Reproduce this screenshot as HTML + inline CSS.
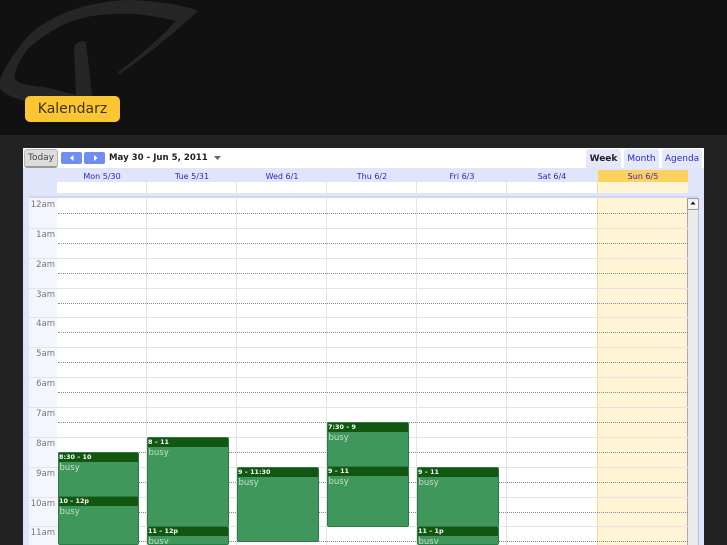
<!DOCTYPE html>
<html><head><meta charset="utf-8">
<style>
html,body{margin:0;padding:0;width:727px;height:545px;overflow:hidden;background:#222;font-family:"DejaVu Sans",sans-serif}
div{position:absolute;box-sizing:border-box}
.hd{top:169px;height:14px;font-size:8px;line-height:16px;text-align:center;color:#2f1fc4;width:90px}
.t{left:29px;width:26px;text-align:right;font-size:8.5px;color:#777;height:12px;line-height:12px;margin-top:1px}
.h{left:57px;width:631px;height:1px;background:#e4e4e4}
.d{left:58px;width:630px;height:0;border-top:1px dotted #888}
.v{top:198px;width:1px;height:347px;background:#e4e4e4}
.e{background:#3f975b;border:1px solid #2c7a45;border-radius:2px;width:82px;color:#c8dfcf;font-size:8.5px;overflow:hidden}
.e b{display:block;background:#12570f;color:#fff;font-size:6.4px;height:9px;line-height:8px;padding-left:0;font-weight:bold;white-space:nowrap}
.e span{display:block;padding-left:.5px;line-height:12px;height:12px}
.tab{top:149px;height:19px;background:#e3e9fb;border-radius:3px 3px 0 0;font-size:9px;line-height:20px;text-align:center;color:#2f1fc4}
.nav{top:152px;height:12px;width:21px;background:#6f8ff0;border-radius:2px}
</style></head><body>
<div style="left:0;top:0;width:727px;height:135px;background:#111"></div>
<svg style="position:absolute;left:0;top:0" width="240" height="135" viewBox="0 0 240 135">
<path d="M198 11C188 6 160 1 130 0C110 0 85 5 67 12C55 17 45 23 37 28C28 35 22 43 17 50C10 60 3 70 0 80V88C3 93 10 97 25 101L76 100V95C65 92 55 89 43 87C35 86 25 85 20 83C16 81 14 78 15 75C15 72 16 69 17 67C20 60 24 54 27 50C32 45 38 40 43 37C50 32 58 27 67 23C78 19 88 16 100 15C112 14 122 13 133 14C148 15 165 18 176 21C160 38 140 56 118 72L119 74.500C148 55 175 32 198 11Z" fill="#262626"/>
<path d="M74 47C76 42 82 40 86 42L92 96H76Z" fill="#262626"/>
</svg>
<div style="left:25px;top:96px;width:95px;height:26px;background:#fcc632;border-radius:5px;font-size:14px;line-height:26px;text-align:center;color:#3d3310">Kalendarz</div>

<div style="left:23px;top:148px;width:681px;height:397px;background:#e0e5fc"></div>
<div style="left:23px;top:148px;width:681px;height:20px;background:#fff"></div>
<div style="left:24px;top:149px;width:34px;height:19px;background:#dcdcdc;border:1px solid #b5b5b5;border-bottom:2px solid #999;border-radius:3px;font-size:9px;line-height:17px;text-align:center;color:#444">Today</div>
<div class="nav" style="left:61px"></div>
<div class="nav" style="left:84px"></div>
<svg style="position:absolute;left:61px;top:152px" width="46" height="12"><path d="M12.500 3L9 6L12.500 9Z M33 3L36.500 6L33 9Z" fill="#fff"/></svg>
<div style="left:109px;top:151px;height:14px;font-size:8.6px;line-height:14px;font-weight:bold;color:#222;white-space:nowrap">May 30 - Jun 5, 2011</div>
<svg style="position:absolute;left:213px;top:155px" width="10" height="6"><path d="M1 1H8L4.500 5Z" fill="#666"/></svg>
<div class="tab" style="left:586px;width:35px;color:#222;font-weight:bold">Week</div>
<div class="tab" style="left:624px;width:35px">Month</div>
<div class="tab" style="left:662px;width:40px;white-space:nowrap">Agenda</div>

<div class="hd" style="left:57px">Mon 5/30</div>
<div class="hd" style="left:147px">Tue 5/31</div>
<div class="hd" style="left:237px">Wed 6/1</div>
<div class="hd" style="left:327px">Thu 6/2</div>
<div class="hd" style="left:417px">Fri 6/3</div>
<div class="hd" style="left:507px">Sat 6/4</div>
<div style="left:598px;top:170px;width:90px;height:12px;background:#fcd25f"></div>
<div class="hd" style="left:598px">Sun 6/5</div>

<div style="left:57px;top:182px;width:631px;height:11px;background:#fff"></div>
<div style="left:598px;top:182px;width:90px;height:11px;background:#fff5d6"></div>
<div style="left:146px;top:182px;width:1px;height:11px;background:#e4e4e4"></div>
<div style="left:236px;top:182px;width:1px;height:11px;background:#e4e4e4"></div>
<div style="left:326px;top:182px;width:1px;height:11px;background:#e4e4e4"></div>
<div style="left:416px;top:182px;width:1px;height:11px;background:#e4e4e4"></div>
<div style="left:506px;top:182px;width:1px;height:11px;background:#e4e4e4"></div>
<div style="left:597px;top:182px;width:1px;height:11px;background:#f5dd96"></div>
<div style="left:29px;top:196px;width:669px;height:2px;background:#d0d7f5"></div>

<div style="left:29px;top:198px;width:28px;height:347px;background:#f3f6fc"></div>
<div style="left:57px;top:198px;width:631px;height:347px;background:#fff"></div>
<div style="left:598px;top:198px;width:90px;height:347px;background:#fff5d6"></div>
<div style="left:597px;top:198px;width:1px;height:347px;background:#f5dd96"></div>
<div class="v" style="left:146px"></div><div class="v" style="left:236px"></div><div class="v" style="left:326px"></div><div class="v" style="left:416px"></div><div class="v" style="left:506px"></div>
<div style="left:687px;top:198px;width:1px;height:347px;background:#aaa"></div>

<div class="h" style="top:228px"></div><div class="h" style="top:258px"></div><div class="h" style="top:288px"></div><div class="h" style="top:317px"></div><div class="h" style="top:347px"></div><div class="h" style="top:377px"></div><div class="h" style="top:407px"></div><div class="h" style="top:437px"></div><div class="h" style="top:467px"></div><div class="h" style="top:497px"></div><div class="h" style="top:526px"></div>
<div style="left:29px;top:228px;width:28px;height:1px;background:#e4e4e4"></div><div style="left:29px;top:258px;width:28px;height:1px;background:#e4e4e4"></div><div style="left:29px;top:288px;width:28px;height:1px;background:#e4e4e4"></div><div style="left:29px;top:317px;width:28px;height:1px;background:#e4e4e4"></div><div style="left:29px;top:347px;width:28px;height:1px;background:#e4e4e4"></div><div style="left:29px;top:377px;width:28px;height:1px;background:#e4e4e4"></div><div style="left:29px;top:407px;width:28px;height:1px;background:#e4e4e4"></div><div style="left:29px;top:437px;width:28px;height:1px;background:#e4e4e4"></div><div style="left:29px;top:467px;width:28px;height:1px;background:#e4e4e4"></div><div style="left:29px;top:497px;width:28px;height:1px;background:#e4e4e4"></div><div style="left:29px;top:526px;width:28px;height:1px;background:#e4e4e4"></div>
<div class="d" style="top:213px"></div><div class="d" style="top:243px"></div><div class="d" style="top:273px"></div><div class="d" style="top:303px"></div><div class="d" style="top:332px"></div><div class="d" style="top:362px"></div><div class="d" style="top:392px"></div><div class="d" style="top:422px"></div><div class="d" style="top:452px"></div><div class="d" style="top:482px"></div><div class="d" style="top:512px"></div><div class="d" style="top:541px"></div>

<div class="t" style="top:198px">12am</div><div class="t" style="top:228px">1am</div><div class="t" style="top:258px">2am</div><div class="t" style="top:288px">3am</div><div class="t" style="top:317px">4am</div><div class="t" style="top:347px">5am</div><div class="t" style="top:377px">6am</div><div class="t" style="top:407px">7am</div><div class="t" style="top:437px">8am</div><div class="t" style="top:467px">9am</div><div class="t" style="top:497px">10am</div><div class="t" style="top:526px">11am</div>

<div style="left:688px;top:198px;width:10px;height:347px;background:#ebebeb"></div>
<div style="left:698px;top:198px;width:1px;height:347px;background:#b9c0dc"></div>
<div style="left:687px;top:198px;width:12px;height:12px;background:#f4f4f4;border:1px solid #999;border-radius:2px"></div>
<svg style="position:absolute;left:687px;top:198px" width="12" height="12"><path d="M3.500 6.500H8.500L6 3.500Z" fill="#111"/></svg>

<div class="e" style="left:58px;top:452px;height:46px;width:81px"><b>8:30 – 10</b><span>busy</span></div>
<div class="e" style="left:58px;top:496px;height:49px;width:81px"><b>10 – 12p</b><span>busy</span></div>
<div class="e" style="left:147px;top:437px;height:90px"><b>8 – 11</b><span>busy</span></div>
<div class="e" style="left:147px;top:526px;height:19px"><b>11 – 12p</b><span>busy</span></div>
<div class="e" style="left:237px;top:467px;height:75px"><b>9 – 11:30</b><span>busy</span></div>
<div class="e" style="left:327px;top:422px;height:46px"><b>7:30 – 9</b><span>busy</span></div>
<div class="e" style="left:327px;top:466px;height:61px"><b>9 – 11</b><span>busy</span></div>
<div class="e" style="left:417px;top:467px;height:60px"><b>9 – 11</b><span>busy</span></div>
<div class="e" style="left:417px;top:526px;height:19px"><b>11 – 1p</b><span>busy</span></div>
</body></html>
